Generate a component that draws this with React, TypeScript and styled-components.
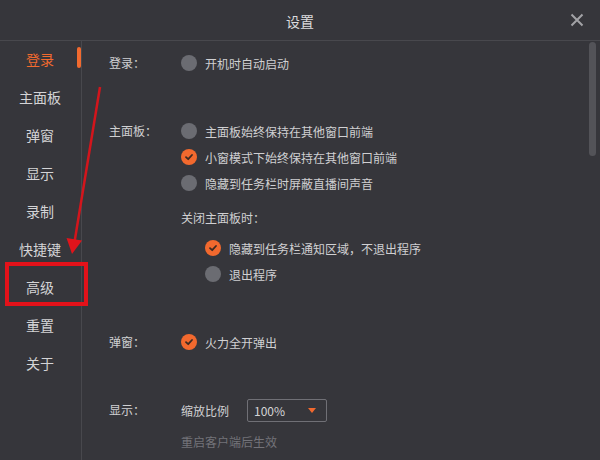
import React from 'react';
import styled, { createGlobalStyle } from 'styled-components';

const GlobalStyle = createGlobalStyle`
  html, body {
    margin: 0;
    padding: 0;
    background: #36363b;
  }
  * {
    box-sizing: border-box;
  }
`;

const Window = styled.div`
  position: relative;
  width: 600px;
  height: 460px;
  display: flex;
  flex-direction: column;
  background: #36363b;
  color: #d2d2d4;
  font-family: "Noto Sans CJK SC", "Noto Sans", sans-serif;
  overflow: hidden;
`;

const TitleBar = styled.div`
  height: 41px;
  flex-shrink: 0;
  display: grid;
  grid-template-columns: 1fr auto 1fr;
  align-items: center;
  border-bottom: 1px solid #48484d;
`;

const Title = styled.div`
  grid-column: 2;
  font-size: 14px;
  color: #dcdcde;
  padding-top: 2px;
`;

const CloseButton = styled.button`
  justify-self: end;
  width: 14px;
  height: 14px;
  margin-right: 16px;
  padding: 0;
  border: none;
  background: none;
  display: flex;
  cursor: pointer;
`;

const Body = styled.div`
  flex: 1;
  display: flex;
  min-height: 0;
`;

const Sidebar = styled.nav`
  width: 82px;
  flex-shrink: 0;
  border-right: 1px solid #48484d;
  display: flex;
  flex-direction: column;
`;

const NavItem = styled.div<{ $active?: boolean }>`
  position: relative;
  height: 38px;
  display: flex;
  align-items: center;
  justify-content: center;
  padding: 0 1px 3px 0;
  font-size: 14px;
  color: ${(p) => (p.$active ? '#f26a2f' : '#d4d4d6')};

  &::after {
    content: '';
    display: ${(p) => (p.$active ? 'block' : 'none')};
    position: absolute;
    right: 0;
    top: 6px;
    width: 4px;
    height: 21px;
    border-radius: 2px;
    background: #f26a2f;
  }
`;

const ContentPane = styled.div`
  position: relative;
  flex: 1;
  min-width: 0;
`;

const Content = styled.div`
  height: 100%;
  overflow: hidden;
`;

const ScrollThumb = styled.div`
  position: absolute;
  top: 1px;
  right: 4px;
  width: 7px;
  height: 114px;
  border-radius: 4px;
  background: #535358;
`;

const Inner = styled.div`
  padding: 9px 0 0 27px;
  display: flex;
  flex-direction: column;
  gap: 42px;
`;

const Section = styled.div`
  display: grid;
  grid-template-columns: 72px 1fr;
  font-size: 12px;
`;

const Label = styled.div`
  height: 26px;
  line-height: 26px;
  color: #d0d0d2;
`;

const Options = styled.div`
  display: flex;
  flex-direction: column;
`;

const Row = styled.div`
  height: 26px;
  display: flex;
  align-items: center;
  gap: 8px;
  color: #d0d0d2;
`;

const SubLabel = styled.div`
  height: 26px;
  line-height: 26px;
  margin-top: 9px;
  color: #d0d0d2;
`;

const SubOptions = styled.div`
  display: flex;
  flex-direction: column;
  padding-left: 24px;
  margin-top: 4px;
`;

const Mark = styled.span<{ $checked?: boolean }>`
  width: 16px;
  height: 16px;
  flex-shrink: 0;
  border-radius: 50%;
  background: ${(p) => (p.$checked ? '#f2692e' : '#6b6c72')};
  display: flex;
  align-items: center;
  justify-content: center;
`;

const Select = styled.div`
  width: 80px;
  height: 23px;
  margin-left: 10px;
  border: 1px solid #707076;
  border-radius: 2px;
  display: flex;
  align-items: center;
  justify-content: space-between;
  padding: 0 10px 0 6px;
  font-size: 12px;
  color: #d4d4d6;
`;

const Caret = styled.span`
  width: 0;
  height: 0;
  border-left: 4px solid transparent;
  border-right: 4px solid transparent;
  border-top: 5px solid #f2692e;
`;

const Hint = styled.div`
  margin-top: 9px;
  line-height: 20px;
  color: #737379;
`;

const Highlight = styled.div`
  position: absolute;
  left: 5px;
  top: 262px;
  width: 83px;
  height: 44px;
  border: 4px solid #e3121a;
  pointer-events: none;
`;

const Annotation = styled.svg`
  position: absolute;
  left: 0;
  top: 0;
  pointer-events: none;
`;

const Check = ({ checked }: { checked?: boolean }) => (
  <Mark $checked={checked}>
    {checked && (
      <svg width="10" height="10" viewBox="0 0 10 10">
        <path d="M2 5.2 L4.2 7.2 L8 3" fill="none" stroke="#3b2a22" strokeWidth="1.8" strokeLinecap="round" strokeLinejoin="round" />
      </svg>
    )}
  </Mark>
);

const Option = ({ checked, text }: { checked?: boolean; text: string }) => (
  <Row>
    <Check checked={checked} />
    {text}
  </Row>
);

const navItems = ['登录', '主面板', '弹窗', '显示', '录制', '快捷键', '高级', '重置', '关于'];

export default function App() {
  return (
    <>
      <GlobalStyle />
      <Window>
        <TitleBar>
          <Title>设置</Title>
          <CloseButton aria-label="关闭">
            <svg width="14" height="14" viewBox="0 0 14 14">
              <path d="M1.5 1.5 L12.5 12.5 M12.5 1.5 L1.5 12.5" stroke="#a2a2a6" strokeWidth="2" />
            </svg>
          </CloseButton>
        </TitleBar>
        <Body>
          <Sidebar>
            {navItems.map((item, i) => (
              <NavItem key={item} $active={i === 0}>
                {item}
              </NavItem>
            ))}
          </Sidebar>
          <ContentPane>
            <Content>
              <Inner>
                <Section>
                  <Label>登录：</Label>
                  <Options>
                    <Option text="开机时自动启动" />
                  </Options>
                </Section>

                <Section>
                  <Label>主面板：</Label>
                  <Options>
                    <Option text="主面板始终保持在其他窗口前端" />
                    <Option checked text="小窗模式下始终保持在其他窗口前端" />
                    <Option text="隐藏到任务栏时屏蔽直播间声音" />
                    <SubLabel>关闭主面板时：</SubLabel>
                    <SubOptions>
                      <Option checked text="隐藏到任务栏通知区域，不退出程序" />
                      <Option text="退出程序" />
                    </SubOptions>
                  </Options>
                </Section>

                <Section>
                  <Label>弹窗：</Label>
                  <Options>
                    <Option checked text="火力全开弹出" />
                  </Options>
                </Section>

                <Section>
                  <Label>显示：</Label>
                  <Options>
                    <Row>
                      缩放比例
                      <Select>
                        100%
                        <Caret />
                      </Select>
                    </Row>
                    <Hint>重启客户端后生效</Hint>
                  </Options>
                </Section>
              </Inner>
            </Content>
            <ScrollThumb />
          </ContentPane>
        </Body>

        <Highlight />
        <Annotation width="600" height="460">
          <line x1="100" y1="87" x2="74.5" y2="242" stroke="#d3151c" strokeWidth="2.5" />
          <polygon points="66.5,238 82,240.5 72,254" fill="#e0141b" />
        </Annotation>
      </Window>
    </>
  );
}
